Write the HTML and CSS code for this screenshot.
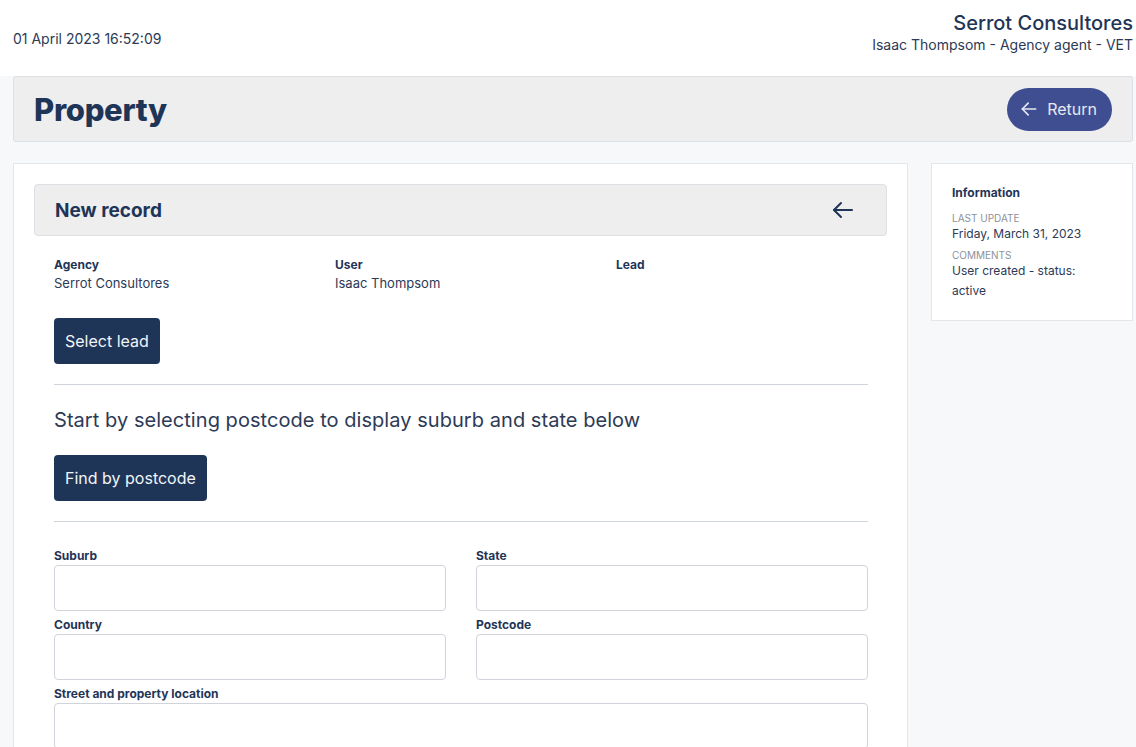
FILE: index.html
```html
<!DOCTYPE html>
<html lang="en">
<head>
<meta charset="utf-8">
<title>Property</title>
<link rel="stylesheet" href="styles.css">
</head>
<body>
<header class="topbar">
  <div class="datetime">01 April 2023 16:52:09</div>
  <div class="account">
    <div class="company">Serrot Consultores</div>
    <div class="userline">Isaac Thompsom - Agency agent - VET</div>
  </div>
</header>
<main class="page">
  <div class="titlebar">
    <h1 class="title">Property</h1>
    <button class="return-btn">
      <svg width="20" height="20" viewBox="0 0 24 24" fill="none" stroke="currentColor" stroke-width="2" stroke-linecap="round" stroke-linejoin="round"><path d="M20 12H4"/><path d="M11 5l-7 7 7 7"/></svg>
      <span>Return</span>
    </button>
  </div>
  <div class="columns">
    <section class="card main-card">
      <div class="section-head">
        <h2 class="section-title">New record</h2>
        <svg class="back-icon" width="24" height="24" viewBox="0 0 24 24" fill="none" stroke="currentColor" stroke-width="2" stroke-linecap="round" stroke-linejoin="round"><path d="M21 12H3"/><path d="M10 5l-7 7 7 7"/></svg>
      </div>
      <div class="section-body">
        <div class="meta">
          <div class="meta-item"><div class="label">Agency</div><div class="value">Serrot Consultores</div></div>
          <div class="meta-item"><div class="label">User</div><div class="value">Isaac Thompsom</div></div>
          <div class="meta-item"><div class="label">Lead</div><div class="value"></div></div>
        </div>
        <button class="btn">Select lead</button>
        <hr class="divider">
        <p class="lead-text">Start by selecting postcode to display suburb and state below</p>
        <button class="btn">Find by postcode</button>
        <hr class="divider">
        <div class="form-grid">
          <div class="field"><label class="label">Suburb</label><input class="input" type="text"></div>
          <div class="field"><label class="label">State</label><input class="input" type="text"></div>
          <div class="field"><label class="label">Country</label><input class="input" type="text"></div>
          <div class="field"><label class="label">Postcode</label><input class="input" type="text"></div>
          <div class="field wide"><label class="label">Street and property location</label><input class="input" type="text"></div>
        </div>
      </div>
    </section>
    <aside class="card side-card">
      <div class="side-title">Information</div>
      <div class="side-key">LAST UPDATE</div>
      <div class="side-val">Friday, March 31, 2023</div>
      <div class="side-key">COMMENTS</div>
      <div class="side-val multi">User created - status: active</div>
    </aside>
  </div>
</main>
</body>
</html>
```
FILE: styles.css
```css
* { box-sizing: border-box; }
html, body { margin: 0; padding: 0; }
body {
  background: #f7f8fa;
  font-family: Inter, "Noto Sans", sans-serif;
  color: #1f3557;
  height: 747px;
  overflow: hidden;
}
.topbar {
  background: #fff;
  height: 76px;
  display: flex;
  align-items: center;
  justify-content: space-between;
  padding: 0 3px 0 13px;
}
.datetime {
  font-size: 14px;
  color: #2d3a56;
  margin-top: 1px;
}
.account { text-align: right; margin-top: -10px; }
.company { font-size: 20px; font-weight: 500; color: #1f3557; line-height: 24px; }
.userline { font-size: 14px; color: #2d3a56; line-height: 20px; margin-top: 0; }
.page { padding: 0 3px 0 13px; }
.titlebar {
  background: #eeeeee;
  border: 1px solid #dcdfe4;
  border-radius: 3px;
  height: 66px;
  display: flex;
  align-items: center;
  justify-content: space-between;
  padding: 0 20px 0 20px;
}
.title {
  margin: 0;
  font-size: 31px;
  font-weight: 800;
  color: #1f3557;
  letter-spacing: -0.3px;
}
.return-btn {
  display: flex;
  align-items: center;
  gap: 8px;
  height: 43px;
  padding: 0 15px 0 12px;
  border: none;
  border-radius: 22px;
  background: #3f4e91;
  color: #e6e8f2;
  font-family: inherit;
  font-size: 16px;
  margin-right: 0;
}
.columns {
  display: flex;
  align-items: flex-start;
  gap: 23px;
  margin-top: 21px;
}
.card {
  background: #fff;
  border: 1px solid #e3e6eb;
}
.main-card {
  width: 895px;
  height: 620px;
  padding: 20px;
}
.side-card {
  width: 202px;
  padding: 21px 20px 19px 20px;
}
.section-head {
  background: #eeeeee;
  border: 1px solid #dcdfe4;
  border-radius: 4px;
  height: 52px;
  display: flex;
  align-items: center;
  justify-content: space-between;
  padding: 0 31px 0 20px;
}
.section-title {
  margin: 0;
  font-size: 19px;
  font-weight: 700;
  color: #1f3557;
}
.back-icon { color: #1f3557; }
.section-body { padding: 0 19px 0 20px; }
.meta {
  display: grid;
  grid-template-columns: repeat(3, 281px);
  margin-top: 21px;
}
.label {
  display: block;
  font-size: 12px;
  font-weight: 700;
  color: #1f3557;
  line-height: 16px;
}
.value {
  font-size: 13px;
  color: #2d3a56;
  line-height: 19px;
  margin-top: 1px;
}
.btn {
  display: block;
  height: 46px;
  padding: 0 11px;
  border: none;
  border-radius: 4px;
  background: #1f3557;
  color: #f2f4f8;
  font-family: inherit;
  font-size: 16px;
}
.meta + .btn { margin-top: 25px; }
.divider {
  border: none;
  border-top: 1px solid #cfd3da;
  margin: 20px 0 0 0;
}
.lead-text {
  margin: 23px 0 23px 0;
  font-size: 20px;
  line-height: 24px;
  color: #2d3a56;
  letter-spacing: 0.05px;
}
.form-grid {
  display: grid;
  grid-template-columns: 1fr 1fr;
  column-gap: 30px;
  row-gap: 6px;
  margin-top: 26px;
}
.field.wide { grid-column: 1 / -1; }
.field .label { margin-bottom: 1px; }
.input {
  display: block;
  width: 100%;
  height: 46px;
  border: 1px solid #d0d4da;
  border-radius: 4px;
  background: #fff;
  font-family: inherit;
  font-size: 14px;
}
.side-title {
  font-size: 12px;
  font-weight: 700;
  color: #1f3557;
  line-height: 16px;
}
.side-key {
  font-size: 10px;
  color: #8c919b;
  line-height: 13px;
  margin-top: 11px;
}
.side-val + .side-key { margin-top: 6px; }
.side-val {
  font-size: 12px;
  color: #2d3a56;
  line-height: 18px;
}
.side-val.multi { line-height: 20px; margin-top: -1px; }
```
